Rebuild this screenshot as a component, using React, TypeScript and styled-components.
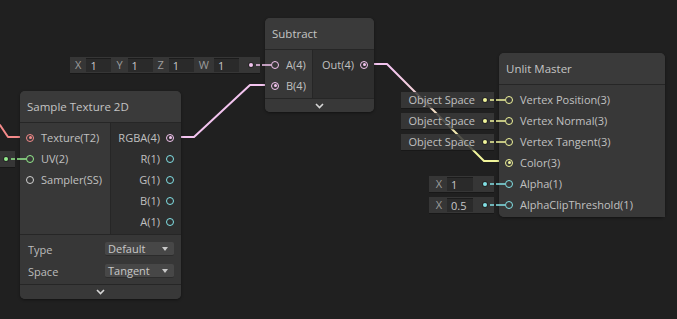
import React from "react";
import styled, { createGlobalStyle } from "styled-components";

const GlobalStyle = createGlobalStyle`
  html, body { margin: 0; padding: 0; background: #202020; }
  #root { width: 677px; height: 319px; }
`;

const C = {
  v4: "#f3c4ef",
  v3: "#f1f59b",
  v2: "#94ec8d",
  v1: "#82e1e6",
  tex: "#f48a8a",
  ss: "#d2d2d2",
};
type PortKind = keyof typeof C;

const Canvas = styled.div`
  position: relative;
  width: 677px;
  height: 319px;
  overflow: hidden;
  background: #202020;
  font-family: "Open Sans", "Liberation Sans", sans-serif;
  font-size: 11px;
  color: #c0c0c0;
`;

const Wires = styled.svg`
  position: absolute;
  left: 0;
  top: 0;
  width: 677px;
  height: 319px;
  pointer-events: none;
`;

const Node = styled.div<{ $x: number; $y: number; $w: number }>`
  position: absolute;
  left: ${(p) => p.$x}px;
  top: ${(p) => p.$y}px;
  width: ${(p) => p.$w}px;
  display: flex;
  flex-direction: column;
  background: #383838;
  border-radius: 5px;
  box-shadow: 0 1px 3px rgba(0, 0, 0, 0.45);
`;

const Header = styled.div`
  height: 31px;
  display: flex;
  align-items: center;
  padding: 0 7px;
  background: #3a3a3a;
  border-radius: 5px 5px 0 0;
  border-bottom: 1px solid #262626;
  font-size: 11.5px;
  color: #c4c4c4;
  white-space: nowrap;
`;

const Ports = styled.div`
  display: flex;
  border-bottom: 1px solid #262626;
  &:last-child {
    border-bottom: none;
    border-radius: 0 0 5px 5px;
  }
`;

const InCol = styled.div<{ $w?: number }>`
  ${(p) => (p.$w ? `width: ${p.$w}px; border-right: 1px solid #262626;` : "flex: 1;")}
  display: flex;
  flex-direction: column;
  padding: 4px 0 2px;
  background: #383838;
  border-bottom-left-radius: inherit;
`;

const OutCol = styled.div`
  flex: 1;
  display: flex;
  flex-direction: column;
  padding: 4px 0 2px;
  background: #2e2e2e;
`;

const InRow = styled.div`
  position: relative;
  height: 21px;
  display: flex;
  align-items: center;
  gap: 7px;
  padding-left: 6px;
  white-space: nowrap;
`;

const OutRow = styled.div<{ $pr?: number }>`
  height: 21px;
  display: flex;
  align-items: center;
  justify-content: flex-end;
  gap: 6px;
  padding-right: ${(p) => p.$pr ?? 7}px;
  white-space: nowrap;
`;

const Port = styled.span<{ $c: string; $on?: boolean }>`
  flex: none;
  box-sizing: border-box;
  width: 8px;
  height: 8px;
  border-radius: 50%;
  border: 1.5px solid ${(p) => p.$c};
  display: flex;
  align-items: center;
  justify-content: center;
  &::after {
    content: "";
    width: 3px;
    height: 3px;
    border-radius: 50%;
    background: ${(p) => (p.$on ? p.$c : "transparent")};
  }
`;

const Slot = styled.div<{ $pl?: number }>`
  position: absolute;
  right: calc(100% + 5px);
  top: 50%;
  transform: translateY(-50%);
  height: 16px;
  display: flex;
  align-items: center;
  padding-left: ${(p) => p.$pl ?? 0}px;
  padding-right: 7px;
  background: rgba(58, 58, 58, 0.86);
  box-shadow: 0 1px 0 rgba(0, 0, 0, 0.25);
`;

const SlotText = styled.span`
  padding: 0 8px 0 7px;
  color: #c0c0c0;
`;

const Axis = styled.span`
  padding: 0 5px;
  color: #9c9c9c;
`;

const Field = styled.span<{ $w?: number }>`
  box-sizing: border-box;
  width: ${(p) => p.$w ?? 25}px;
  height: 14px;
  display: flex;
  align-items: center;
  padding-left: 4px;
  background: #2a2a2a;
  border-top: 1px solid #1c1c1c;
  color: #c8c8c8;
`;

const Spacer = styled.span<{ $w: number }>`
  width: ${(p) => p.$w}px;
`;

const Dot = styled.span<{ $c: string; $ml?: number }>`
  flex: none;
  width: 4px;
  height: 4px;
  margin-left: ${(p) => p.$ml ?? 10}px;
  border-radius: 50%;
  background: ${(p) => p.$c};
  box-shadow: 0 0 0 1px #262626;
`;

const Connector = styled.span<{ $c: string }>`
  position: absolute;
  left: -12px;
  top: 50%;
  width: 18px;
  height: 2px;
  margin-top: -1px;
  opacity: 0.75;
  background: linear-gradient(
    to right,
    transparent 0 3px,
    ${(p) => p.$c} 3px 7px,
    transparent 7px 9px,
    ${(p) => p.$c} 9px 18px
  );
`;

const Controls = styled.div`
  display: flex;
  flex-direction: column;
  padding: 3px 0 2px;
  background: #373737;
  border-bottom: 1px solid #262626;
`;

const ControlRow = styled.div`
  height: 22px;
  display: flex;
  align-items: center;
  padding: 0 7px 0 8px;
`;

const ControlLabel = styled.span`
  flex: 1;
  color: #bcbcbc;
`;

const Dropdown = styled.div`
  box-sizing: border-box;
  width: 69px;
  height: 14px;
  display: flex;
  align-items: center;
  padding: 0 6px 0 3px;
  background: #474747;
  border-bottom: 1px solid #2c2c2c;
  border-radius: 2px;
  color: #c8c8c8;
  span {
    flex: 1;
  }
  &::after {
    content: "";
    border-left: 3.5px solid transparent;
    border-right: 3.5px solid transparent;
    border-top: 4px solid #c8c8c8;
  }
`;

const Footer = styled.div<{ $h: number }>`
  height: ${(p) => p.$h}px;
  display: flex;
  align-items: center;
  justify-content: center;
  background: #383838;
  border-radius: 0 0 5px 5px;
`;

const Chevron = () => (
  <svg width="9" height="6" viewBox="0 0 9 6">
    <polyline points="1,1 4.5,4.5 8,1" fill="none" stroke="#d6d6d6" strokeWidth="1.6" />
  </svg>
);

const In: React.FC<{ kind: PortKind; on?: boolean; label: string; children?: React.ReactNode }> = ({
  kind,
  on,
  label,
  children,
}) => (
  <InRow>
    <Port $c={C[kind]} $on={on} />
    <span>{label}</span>
    {children}
    {children ? <Connector $c={C[kind]} /> : null}
  </InRow>
);

const Out: React.FC<{ kind: PortKind; on?: boolean; label: string; pr?: number }> = ({ kind, on, label, pr }) => (
  <OutRow $pr={pr}>
    <span>{label}</span>
    <Port $c={C[kind]} $on={on} />
  </OutRow>
);

export default function App() {
  return (
    <>
      <GlobalStyle />
      <Canvas>
        <Wires viewBox="0 0 677 319">
          <defs>
            <linearGradient id="g1" gradientUnits="userSpaceOnUse" x1="392" y1="68" x2="478" y2="152">
              <stop offset="0" stopColor={C.v4} />
              <stop offset="1" stopColor={C.v3} />
            </linearGradient>
          </defs>
          <path d="M -6 125 L 0 125 L 8 137 L 26 137" fill="none" stroke={C.tex} strokeWidth="2" strokeLinejoin="round" />
          <path d="M 174 137 L 194 137 L 250 85 L 271 85" fill="none" stroke={C.v4} strokeWidth="2" strokeLinejoin="round" />
          <path d="M 368 64 L 387 64 L 484 161 L 505 161" fill="none" stroke="url(#g1)" strokeWidth="2" strokeLinejoin="round" />
        </Wires>

        <Node $x={20} $y={91} $w={161}>
          <Header>Sample Texture 2D</Header>
          <Ports>
            <InCol $w={90}>
              <In kind="tex" on label="Texture(T2)" />
              <In kind="v2" label="UV(2)">
                <Slot>
                  <Spacer $w={60} />
                  <Dot $c={C.v2} />
                </Slot>
              </In>
              <In kind="ss" label="Sampler(SS)" />
            </InCol>
            <OutCol>
              <Out kind="v4" on label="RGBA(4)" />
              <Out kind="v1" label="R(1)" />
              <Out kind="v1" label="G(1)" />
              <Out kind="v1" label="B(1)" />
              <Out kind="v1" label="A(1)" />
            </OutCol>
          </Ports>
          <Controls>
            <ControlRow>
              <ControlLabel>Type</ControlLabel>
              <Dropdown>
                <span>Default</span>
              </Dropdown>
            </ControlRow>
            <ControlRow>
              <ControlLabel>Space</ControlLabel>
              <Dropdown>
                <span>Tangent</span>
              </Dropdown>
            </ControlRow>
          </Controls>
          <Footer $h={14}>
            <Chevron />
          </Footer>
        </Node>

        <Node $x={265} $y={18} $w={109}>
          <Header>Subtract</Header>
          <Ports>
            <InCol $w={47}>
              <In kind="v4" label="A(4)">
                <Slot>
                  <Axis>X</Axis>
                  <Field>1</Field>
                  <Axis>Y</Axis>
                  <Field>1</Field>
                  <Axis>Z</Axis>
                  <Field>1</Field>
                  <Axis>W</Axis>
                  <Field>1</Field>
                  <Dot $c={C.v4} />
                </Slot>
              </In>
              <In kind="v4" on label="B(4)" />
            </InCol>
            <OutCol>
              <Out kind="v4" on label="Out(4)" pr={6} />
            </OutCol>
          </Ports>
          <Footer $h={13}>
            <Chevron />
          </Footer>
        </Node>

        <Node $x={499} $y={53} $w={166}>
          <Header>Unlit Master</Header>
          <Ports>
            <InCol>
              <In kind="v3" label="Vertex Position(3)">
                <Slot>
                  <SlotText>Object Space</SlotText>
                  <Dot $c={C.v3} $ml={0} />
                </Slot>
              </In>
              <In kind="v3" label="Vertex Normal(3)">
                <Slot>
                  <SlotText>Object Space</SlotText>
                  <Dot $c={C.v3} $ml={0} />
                </Slot>
              </In>
              <In kind="v3" label="Vertex Tangent(3)">
                <Slot>
                  <SlotText>Object Space</SlotText>
                  <Dot $c={C.v3} $ml={0} />
                </Slot>
              </In>
              <In kind="v3" on label="Color(3)" />
              <In kind="v1" label="Alpha(1)">
                <Slot $pl={2}>
                  <Axis>X</Axis>
                  <Field $w={26}>1</Field>
                  <Dot $c={C.v1} />
                </Slot>
              </In>
              <In kind="v1" label="AlphaClipThreshold(1)">
                <Slot $pl={2}>
                  <Axis>X</Axis>
                  <Field $w={26}>0.5</Field>
                  <Dot $c={C.v1} />
                </Slot>
              </In>
            </InCol>
          </Ports>
        </Node>
      </Canvas>
    </>
  );
}
